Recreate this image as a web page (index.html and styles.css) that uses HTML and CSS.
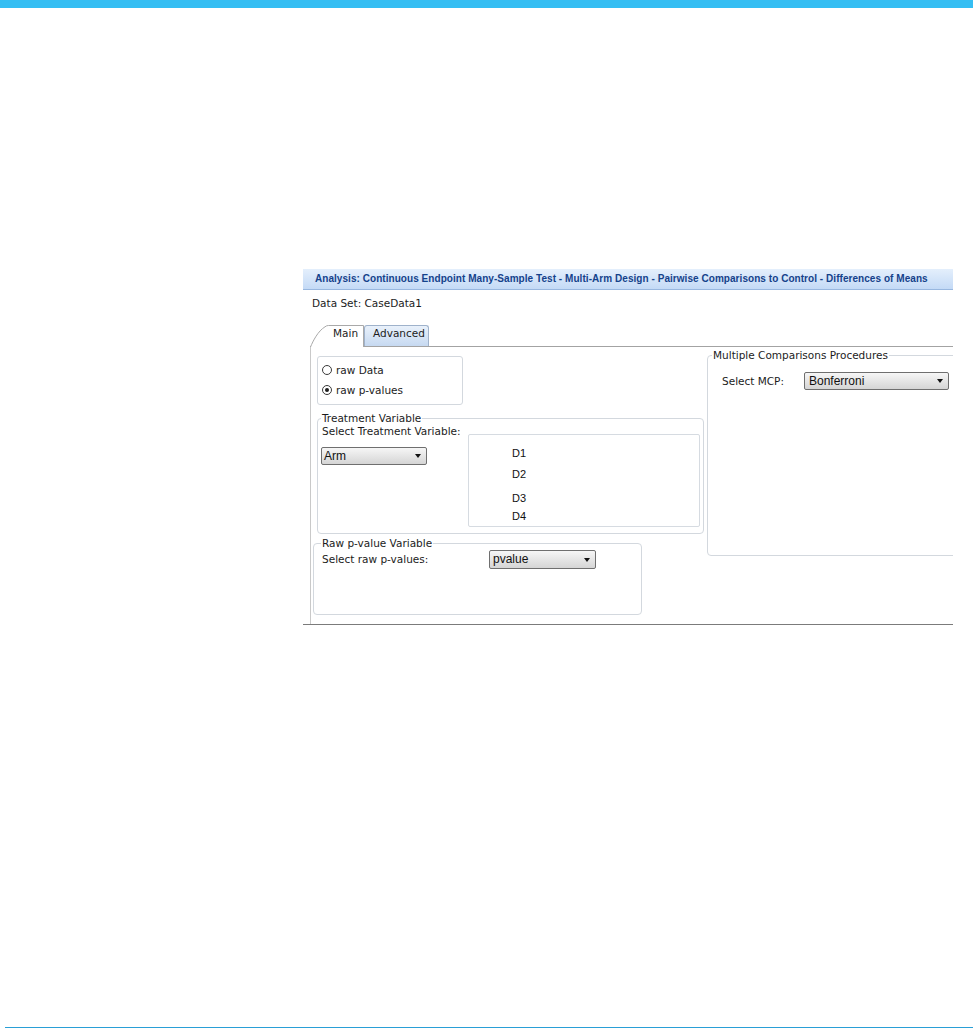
FILE: index.html
```html
<!DOCTYPE html>
<html>
<head>
<meta charset="utf-8">
<title>Analysis</title>
<link rel="stylesheet" href="styles.css">
</head>
<body>
<div class="page">
  <div class="topbar"></div>
  <div class="dialog">
    <div class="titlebar">Analysis: Continuous Endpoint Many-Sample Test - Multi-Arm Design - Pairwise Comparisons to Control - Differences of Means</div>
    <div class="dataset">Data Set: CaseData1</div>
    <div class="tabs">
      <div class="tab tab-main">
        <svg class="tab-shape" width="54" height="22" viewBox="0 0 54 22"><path d="M0.5 22 C3 16 8 6 15 1.8 Q16.5 0.5 18.5 0.5 H53.5 V22" fill="#fff" stroke="#a9a9a9" stroke-width="1"/></svg>
        <span class="tab-text">Main</span>
      </div>
      <div class="tab tab-adv">Advanced</div>
    </div>
    <div class="frame">
      <div class="panel">
        <div class="leftcol">
          <div class="radiobox">
            <div class="radio-row"><span class="radio"></span><span>raw Data</span></div>
            <div class="radio-row"><span class="radio on"></span><span>raw p-values</span></div>
          </div>
          <fieldset class="treat">
            <legend>Treatment Variable</legend>
            <div class="treat-row">
              <div class="treat-left">
                <div class="label">Select Treatment Variable:</div>
                <div class="select sel-arm">Arm</div>
              </div>
              <div class="listbox">
                <div>D1</div>
                <div>D2</div>
                <div>D3</div>
                <div>D4</div>
              </div>
            </div>
          </fieldset>
          <fieldset class="raw">
            <legend>Raw p-value Variable</legend>
            <div class="field-row">
              <div class="label raw-label">Select raw p-values:</div>
              <div class="select sel-p">pvalue</div>
            </div>
          </fieldset>
        </div>
        <div class="rightcol">
          <fieldset class="mcp">
            <legend>Multiple Comparisons Procedures</legend>
            <div class="field-row mcp-row">
              <div class="label mcp-label">Select MCP:</div>
              <div class="select sel-mcp">Bonferroni</div>
            </div>
          </fieldset>
        </div>
      </div>
    </div>
  </div>
  <div class="bottomline"></div>
</div>
</body>
</html>
```

FILE: styles.css
```css
* { box-sizing: border-box; }
html, body { margin: 0; padding: 0; background: #fff; }
body {
  font-family: "DejaVu Sans", Verdana, sans-serif;
  font-size: 10.5px;
  color: #1c1c1c;
}
.page {
  height: 1028px;
  display: flex;
  flex-direction: column;
  overflow: hidden;
}
.topbar { height: 8px; background: #35bef3; flex: none; }
.dialog {
  margin: 261px 0 0 303px;
  width: 650px;
  overflow: hidden;
  flex: none;
}
.titlebar {
  height: 21px;
  border-bottom: 1px solid #98b7df;
  background: linear-gradient(#e4effc, #c4daf6);
  padding: 2px 0 0 12px;
  font: bold 10px/16px "Liberation Sans", Arial, sans-serif;
  letter-spacing: 0.05px;
  color: #15428b;
  white-space: nowrap;
  overflow: hidden;
}
.dataset {
  margin: 6px 0 0 9px;
  height: 14px;
  line-height: 14px;
}
.tabs {
  display: flex;
  align-items: flex-end;
  margin: 15px 0 0 7px;
  height: 21px;
}
.tab { flex: none; line-height: 14px; }
.tab-main {
  position: relative;
  z-index: 1;
  width: 54px;
  height: 22px;
  margin-bottom: -1px;
}
.tab-shape { position: absolute; left: 0; top: 0; }
.tab-text { position: relative; display: block; padding: 1px 0 0 23px; }
.tab-adv {
  height: 21px;
  border: 1px solid #9fb2cb;
  border-bottom: none;
  border-radius: 3px 3px 0 0;
  background: linear-gradient(#e9f1fb, #c6d9f1);
  padding: 0 3px 0 8px;
}
.frame { border-bottom: 1px solid #7b7b7b; }
.panel {
  margin-left: 7px;
  height: 278px;
  border-left: 1px solid #c9c9c9;
  border-top: 1px solid #a3a3a3;
  display: flex;
}
.leftcol {
  width: 393px;
  flex: none;
  padding-top: 9px;
  display: flex;
  flex-direction: column;
  align-items: flex-start;
}
.radiobox {
  margin-left: 6px;
  width: 146px;
  height: 49px;
  border: 1px solid #d3d8de;
  border-radius: 3px;
  padding: 3px 0 0 4px;
}
.radio-row {
  display: flex;
  align-items: center;
  gap: 4px;
  height: 20px;
}
.radio {
  width: 10px;
  height: 10px;
  border: 1px solid #3a3a3a;
  border-radius: 50%;
  display: flex;
  align-items: center;
  justify-content: center;
  flex: none;
}
.radio.on::after {
  content: "";
  width: 4px;
  height: 4px;
  border-radius: 50%;
  background: #1e1e1e;
}
fieldset {
  margin: 0;
  border: 1px solid #d3d8de;
  border-radius: 4px;
  min-width: 0;
}
legend { padding: 0 1px; line-height: 13px; white-space: nowrap; }
.label { line-height: 13px; white-space: nowrap; }
.treat {
  margin: 7px 0 0 6px;
  width: 387px;
  padding: 0 3px 6px 4px;
}
.treat legend { margin-left: -1px; }
.treat-row { display: flex; }
.treat-left { width: 146px; flex: none; }
.select {
  position: relative;
  border: 1px solid #6f6f6f;
  border-radius: 2px;
  background: linear-gradient(#f6f6f6, #d5d5d5);
  font: 12px/16px "Liberation Sans", Arial, sans-serif;
  color: #111;
  padding-left: 2px;
  white-space: nowrap;
}
.select::after {
  content: "";
  position: absolute;
  right: 5px;
  top: 50%;
  margin-top: -2px;
  border-left: 3.5px solid transparent;
  border-right: 3.5px solid transparent;
  border-top: 4px solid #111;
}
.sel-arm { margin: 9px 0 0 -1px; width: 106px; height: 18px; }
.listbox {
  margin-top: 9px;
  width: 232px;
  height: 93px;
  border: 1px solid #d6dbe1;
  border-radius: 2px;
  padding-left: 43px;
  font: 11px/14px "Liberation Sans", Arial, sans-serif;
  color: #111;
}
.listbox div:nth-child(1) { margin-top: 11px; }
.listbox div:nth-child(2) { margin-top: 7px; }
.listbox div:nth-child(3) { margin-top: 10px; }
.listbox div:nth-child(4) { margin-top: 4px; }
.raw {
  margin: 3px 0 0 2px;
  width: 329px;
  padding: 0 0 45px 8px;
}
.raw legend { margin-left: -1px; }
.field-row { display: flex; align-items: center; }
.raw-label { width: 167px; flex: none; }
.sel-p { width: 107px; height: 19px; line-height: 17px; padding-left: 3px; }
.rightcol { flex: none; }
.mcp {
  margin: 2px 0 0 3px;
  width: 262px;
  padding: 0 0 165px 14px;
}
.mcp legend { margin-left: -10px; }
.mcp-row { margin-top: 10px; }
.mcp-label { width: 82px; flex: none; }
.sel-mcp { width: 145px; height: 18px; padding-left: 4px; }
.bottomline {
  margin: auto 0 0 5px;
  height: 1px;
  background: #2a9fd6;
  flex: none;
}
```
